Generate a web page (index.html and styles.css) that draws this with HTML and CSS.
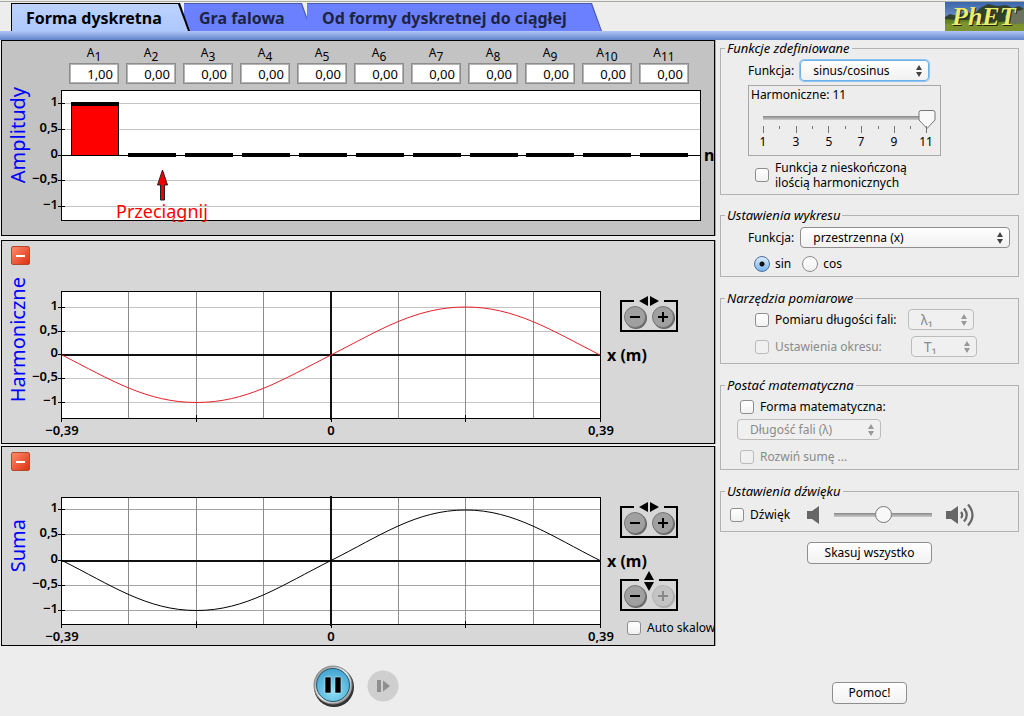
FILE: index.html
```html
<!DOCTYPE html>
<html lang="pl">
<head>
<meta charset="utf-8">
<title>Fourier</title>
<link rel="stylesheet" href="styles.css">
</head>
<body>
<header class="header">
  <nav class="tabs">
    <button class="tab tab-active" type="button"><span>Forma dyskretna</span></button>
    <button class="tab" type="button"><span>Gra falowa</span></button>
    <button class="tab tab-wide" type="button"><span>Od formy dyskretnej do ciągłej</span></button>
  </nav>
  <svg class="logo" viewBox="0 0 79 29" width="79" height="29" role="img" aria-label="PhET">
    <defs>
      <linearGradient id="sky" x1="0" y1="0" x2="0" y2="1"><stop offset="0" stop-color="#3a66ac"/><stop offset="1" stop-color="#9cb4d4"/></linearGradient>
      <linearGradient id="grass" x1="0" y1="0" x2="0" y2="1"><stop offset="0" stop-color="#5d7a22"/><stop offset="1" stop-color="#86a02c"/></linearGradient>
    </defs>
    <rect width="79" height="29" fill="url(#sky)"/>
    <path d="M0 15l5-3 8 2 7-4 9 2 6-6 8-4 9 2 9-1 7 3 6-2 5 3v22H0z" fill="#33402a"/>
    <path d="M0 17l12 1 14 0 16 3 37-3v11H0z" fill="url(#grass)"/>
    <path d="M60 14l8-8 6 3 5-2v14l-9 1-8-2z" fill="#6a7360"/>
    <path d="M0 22l20-2 20 4 39-2v7H0z" fill="#7c9330"/>
    <text class="logo-shadow" x="8" y="24">PhET</text>
    <text class="logo-text" x="7" y="23">PhET</text>
  </svg>
</header>
<main class="layout">
  <section class="work">
    <section class="panel panel-amp">
      <div class="side"><h2 class="title title-amp">Amplitudy</h2></div>
      <div class="amp-body">
        <div class="amps">
          <label class="amp"><span>A<sub>1</sub></span><input type="text" value="1,00"></label>
          <label class="amp"><span>A<sub>2</sub></span><input type="text" value="0,00"></label>
          <label class="amp"><span>A<sub>3</sub></span><input type="text" value="0,00"></label>
          <label class="amp"><span>A<sub>4</sub></span><input type="text" value="0,00"></label>
          <label class="amp"><span>A<sub>5</sub></span><input type="text" value="0,00"></label>
          <label class="amp"><span>A<sub>6</sub></span><input type="text" value="0,00"></label>
          <label class="amp"><span>A<sub>7</sub></span><input type="text" value="0,00"></label>
          <label class="amp"><span>A<sub>8</sub></span><input type="text" value="0,00"></label>
          <label class="amp"><span>A<sub>9</sub></span><input type="text" value="0,00"></label>
          <label class="amp"><span>A<sub>10</sub></span><input type="text" value="0,00"></label>
          <label class="amp"><span>A<sub>11</sub></span><input type="text" value="0,00"></label>
        </div>
        <svg class="chart" viewBox="34 84 680 151">
          <rect x="61.5" y="90.5" width="639" height="130" fill="#fff"/>
          <path class="grid-light" d="M62 103.5H700M62 129.5H700M62 180.5H700M62 206.5H700"/>
          <rect class="frame" x="61.5" y="90.5" width="639" height="130"/>
          <path class="axis" d="M58 103.5h7M58 129.5h7M58 155.5H701M58 180.5h7M58 206.5h7"/>
          <rect x="71.5" y="103.5" width="47" height="52" fill="#f00" stroke="#000"/>
          <path d="M71 104h48M128 155h48M185 155h48M242 155h48M299 155h48M356 155h48M413 155h48M470 155h48M526 155h48M583 155h48M640 155h48" stroke="#000" stroke-width="4"/>
          <g class="ticks ticks-y"><text x="58" y="106">1</text><text x="58" y="132">0,5</text><text x="58" y="158">0</text><text x="58" y="183">−0,5</text><text x="58" y="209">−1</text></g>
          <path d="M162.500 170l5 15h-3v15h-4v-15h-3z" fill="#e00" stroke="#222"/>
          <text class="hint" x="116" y="218">Przeciągnij</text>
          <text class="unit" x="704" y="161">n</text>
        </svg>
      </div>
    </section>
    <section class="panel panel-harm">
      <div class="side">
        <button class="collapse" type="button" aria-label="Zwiń Harmoniczne"></button>
        <h2 class="title title-harm">Harmoniczne</h2>
      </div>
      <svg class="chart" viewBox="34 241 570 202">
        <rect x="61.500" y="291.500" width="539" height="127" fill="#fff"/>
        <path class="grid-light" d="M62 307.500H600M62 331.500H600M62 378.500H600M62 402.500H600"/>
        <path class="grid-dark" d="M128.500 292V418M196.500 292V418M263.500 292V418M398.500 292V418M465.500 292V418M533.500 292V418"/>
        <rect class="frame" x="61.500" y="291.500" width="539" height="127"/>
        <path class="axis" d="M58 307.500h7M58 331.500h7M58 354.500h7M58 378.500h7M58 402.500h7M61.500 418v4M196.500 415v7M331.500 418v4M465.500 415v7M600.500 418v4"/>
        <path class="axis-bold" d="M62 355H601M331 291V420"/>
        <path class="wave wave-red" d="M62 355C111 380 147 402.500 196.500 402.500C246 402.500 282 380 331 355C380 330 416 307 465.500 307C515 307 551 330 600 355"/>
        <g class="ticks ticks-y"><text x="58" y="310">1</text><text x="58" y="334">0,5</text><text x="58" y="357">0</text><text x="58" y="381">−0,5</text><text x="58" y="405">−1</text></g>
        <g class="ticks ticks-x"><text x="62" y="435">−0,39</text><text x="331" y="435">0</text><text x="601" y="435">0,39</text></g>
      </svg>
      <div class="controls">
        <div class="zoom">
          <svg class="arrows" width="22" height="10" viewBox="0 0 22 10"><path d="M10 0v10L1 5zM12 0v10l9-5z"/></svg>
          <button class="round" type="button" aria-label="Pomniejsz"><svg width="12" height="12" viewBox="0 0 12 12"><path d="M1 6h10"/></svg></button>
          <button class="round" type="button" aria-label="Powiększ"><svg width="12" height="12" viewBox="0 0 12 12"><path d="M1 6h10M6 1v10"/></svg></button>
        </div>
        <span class="axis-name">x (m)</span>
      </div>
    </section>
    <section class="panel panel-sum">
      <div class="side">
        <button class="collapse" type="button" aria-label="Zwiń Suma"></button>
        <h2 class="title title-sum">Suma</h2>
      </div>
      <svg class="chart" viewBox="34 447 570 198">
        <rect x="61.500" y="497.500" width="539" height="127" fill="#fff"/>
        <path class="grid-mid" d="M62 509.500H600M62 534.500H600M62 585.500H600M62 610.500H600"/>
        <path class="grid-dark" d="M128.500 498V624M196.500 498V624M263.500 498V624M398.500 498V624M465.500 498V624M533.500 498V624"/>
        <rect class="frame" x="61.500" y="497.500" width="539" height="127"/>
        <path class="axis" d="M58 509.500h7M58 534.500h7M58 560.500h7M58 585.500h7M58 610.500h7M61.500 624v4M196.500 621v7M331.500 624v4M465.500 621v7M600.500 624v4"/>
        <path class="axis-bold" d="M62 561H601M331 496V626"/>
        <path class="wave wave-black" d="M62 560.500C111 585 147 610.500 196.500 610.500C246 610.500 282 585 331 560.500C380 536 416 510 465.500 510C515 510 551 536 600 560.500"/>
        <g class="ticks ticks-y"><text x="58" y="512">1</text><text x="58" y="537">0,5</text><text x="58" y="563">0</text><text x="58" y="588">−0,5</text><text x="58" y="613">−1</text></g>
        <g class="ticks ticks-x"><text x="62" y="641">−0,39</text><text x="331" y="641">0</text><text x="601" y="641">0,39</text></g>
      </svg>
      <div class="controls">
        <div class="zoom">
          <svg class="arrows" width="22" height="10" viewBox="0 0 22 10"><path d="M10 0v10L1 5zM12 0v10l9-5z"/></svg>
          <button class="round" type="button" aria-label="Pomniejsz poziomo"><svg width="12" height="12" viewBox="0 0 12 12"><path d="M1 6h10"/></svg></button>
          <button class="round" type="button" aria-label="Powiększ poziomo"><svg width="12" height="12" viewBox="0 0 12 12"><path d="M1 6h10M6 1v10"/></svg></button>
        </div>
        <span class="axis-name">x (m)</span>
        <div class="zoom zoom-v">
          <svg class="arrows" width="12" height="20" viewBox="0 0 12 20"><path d="M1 9h10L6 0zM1 11h10l-5 9z"/></svg>
          <button class="round" type="button" aria-label="Pomniejsz pionowo"><svg width="12" height="12" viewBox="0 0 12 12"><path d="M1 6h10"/></svg></button>
          <button class="round" type="button" aria-label="Powiększ pionowo" disabled><svg width="12" height="12" viewBox="0 0 12 12"><path d="M1 6h10M6 1v10"/></svg></button>
        </div>
        <label class="check auto"><input type="checkbox"><span>Auto skalow</span></label>
      </div>
    </section>
    <div class="transport">
      <button class="play" type="button" aria-label="Pauza">
        <svg width="44" height="44" viewBox="0 0 44 44">
          <defs><radialGradient id="blue" cx=".5" cy=".7" r=".7"><stop offset="0" stop-color="#8fe0f6"/><stop offset="1" stop-color="#42a3d0"/></radialGradient>
          <linearGradient id="rim" x1="0" y1="0" x2="1" y2="1"><stop offset="0" stop-color="#777"/><stop offset=".5" stop-color="#eee"/><stop offset="1" stop-color="#888"/></linearGradient></defs>
          <circle cx="22" cy="23" r="20" fill="#333"/><circle cx="21" cy="21" r="19" fill="url(#rim)" stroke="#888"/>
          <circle cx="21" cy="21" r="16.500" fill="url(#blue)" stroke="#245a73"/>
          <path d="M13 13h6v16h-6zM23 13h6v16h-6z" stroke="#bfeaf7" stroke-width=".6"/>
        </svg>
      </button>
      <button class="step" type="button" aria-label="Krok" disabled>
        <svg width="32" height="32" viewBox="0 0 32 32"><circle cx="16" cy="16" r="15.500" fill="#cfcfcf"/><path d="M10 10h4v12h-4zM16 10.500v11l7-5.500z" fill="#8f8f8f"/></svg>
      </button>
    </div>
  </section>
  <aside class="sidebar">
    <fieldset class="group group-fn">
      <legend>Funkcje zdefiniowane</legend>
      <div class="row"><label for="fn">Funkcja:</label><select id="fn" class="focused w-fn"><option>sinus/cosinus</option></select></div>
      <div class="harmonics">
        <label for="harm">Harmoniczne: 11</label>
        <input id="harm" class="range-point" type="range" min="1" max="11" value="11">
        <svg class="scale" viewBox="0 0 191 26" width="191" height="26">
          <path d="M14.500 0v7M47.500 0v7M79.500 0v7M112.500 0v7M145.500 0v7M177.500 0v7M30.500 0v3M63.500 0v3M96.500 0v3M129.500 0v3M161.500 0v3" stroke="#777"/>
          <g><text x="14" y="20">1</text><text x="47" y="20">3</text><text x="80" y="20">5</text><text x="112" y="20">7</text><text x="145" y="20">9</text><text x="177" y="20">11</text></g>
        </svg>
      </div>
      <label class="check infinite"><input type="checkbox"><span>Funkcja z nieskończoną<br>ilością harmonicznych</span></label>
    </fieldset>
    <fieldset class="group group-plot">
      <legend>Ustawienia wykresu</legend>
      <div class="row"><label for="dom">Funkcja:</label><select id="dom" class="w-dom"><option>przestrzenna (x)</option></select></div>
      <div class="radios">
        <label class="check"><input type="radio" name="wave" checked><span>sin</span></label>
        <label class="check"><input type="radio" name="wave"><span>cos</span></label>
      </div>
    </fieldset>
    <fieldset class="group group-tools">
      <legend>Narzędzia pomiarowe</legend>
      <div class="tool"><label class="check"><input type="checkbox"><span>Pomiaru długości fali:</span></label><select class="w-sym" disabled aria-label="Długość fali"><option>λ₁</option></select></div>
      <div class="tool"><label class="check"><input type="checkbox" disabled><span>Ustawienia okresu:</span></label><select class="w-sym" disabled aria-label="Okres"><option>T₁</option></select></div>
    </fieldset>
    <fieldset class="group group-math">
      <legend>Postać matematyczna</legend>
      <label class="check"><input type="checkbox"><span>Forma matematyczna:</span></label>
      <select class="w-math" disabled aria-label="Forma"><option>Długość fali (λ)</option></select>
      <label class="check"><input type="checkbox" disabled><span>Rozwiń sumę ...</span></label>
    </fieldset>
    <fieldset class="group group-sound">
      <legend>Ustawienia dźwięku</legend>
      <label class="check"><input type="checkbox"><span>Dźwięk</span></label>
      <svg class="quiet" width="13" height="18" viewBox="0 0 13 18"><path d="M0 5h5l7-5v18l-7-5H0z" fill="#666"/></svg>
      <input class="range-round" type="range" min="0" max="100" value="50" aria-label="Głośność">
      <svg width="29" height="24" viewBox="0 0 29 24"><path d="M0 8h5l7-5v18l-7-5H0z" fill="#666"/><path d="M15 9q2.500 3 0 6M18 5.500q5.500 6.500 0 13M22 1.500q9 10.500 0 21" fill="none" stroke="#666" stroke-width="2.200"/></svg>
    </fieldset>
    <button class="push reset" type="button">Skasuj wszystko</button>
    <button class="push help" type="button">Pomoc!</button>
  </aside>
</main>
</body>
</html>
```
FILE: styles.css
```css
* { box-sizing: border-box; }
body {
  margin: 0;
  min-height: 100vh;
  display: flex;
  flex-direction: column;
  background: #ededed;
  color: #000;
  font: 12px/16px "Noto Sans", "Open Sans", sans-serif;
}
button, input, select { font: inherit; color: inherit; margin: 0; }
button { padding: 0; border: 0; background: none; }

.header {
  display: flex;
  justify-content: space-between;
  align-items: flex-end;
  height: 40px;
  padding: 2px 0 9px;
  background:
    linear-gradient(#a8aaa0, #a8aaa0) 0 1px / 100% 1px no-repeat,
    linear-gradient(#b0c6f8, #6383cb) bottom / 100% 9px no-repeat;
}
.tabs { display: flex; padding-left: 11px; }
.tab {
  position: relative;
  z-index: 1;
  min-width: 128px;
  height: 28px;
  padding: 0 26px 0 15px;
  margin-left: -5px;
  background: #4a5ab0;
  color: #1c2440;
  font: bold 16px/30px "Noto Sans", "Open Sans", sans-serif;
  text-align: left;
  clip-path: polygon(0 0, calc(100% - 10px) 0, 100% 100%, 0 100%);
}
.tab::before {
  content: "";
  position: absolute;
  inset: 1px 1px 0 0;
  background: #6b80ff;
  clip-path: polygon(0 0, calc(100% - 10px) 0, 100% 100%, 0 100%);
}
.tab span { position: relative; }
.tab-active { z-index: 2; min-width: 179px; margin: 0 -1px 0 0; background: #000; color: #000; }
.tab-active::before { inset: 1px 2px 0 1px; background: linear-gradient(#bdd2ff, #adc8fb); }
.tab-wide { min-width: 295px; }
.logo { display: block; }
.logo text { font: italic bold 26px "Liberation Serif", serif; }
.logo-shadow { fill: #1c2010; }
.logo-text { fill: #e8ec72; }

.layout { flex: 1; display: flex; }
.work { flex: 1; min-width: 0; padding-left: 1px; display: flex; flex-direction: column; }
.panel { display: flex; border: 1px solid #000; background: #d7d7d7; box-shadow: 1px 0 0 #aaa; overflow: hidden; }
.panel-amp { background: #c3c3c3; margin-bottom: 4px; }
.panel-harm { margin-bottom: 2px; }
.side { flex: 0 0 32px; display: flex; flex-direction: column; align-items: center; }
.title {
  margin: 0;
  color: #00f;
  font-weight: normal;
  font-size: 20px;
  line-height: 28px;
  writing-mode: vertical-rl;
  transform: rotate(180deg);
  white-space: nowrap;
}
.title-amp { margin-top: 46px; }
.title-harm { margin-top: 12px; }
.title-sum { margin-top: 48px; }
.collapse {
  width: 19px;
  height: 19px;
  margin: 5px 0 0 4px;
  border: 1px solid #b3482c;
  border-radius: 2px;
  background: linear-gradient(#fff, #fff) center / 9px 2px no-repeat, linear-gradient(135deg, #ff8a6a, #dd3410);
}
.chart { display: block; flex: 1; min-width: 0; width: 100%; overflow: visible; }
.amp-body { flex: 1; min-width: 0; }
.amps {
  display: grid;
  grid-template-columns: repeat(11, 1fr);
  column-gap: 7px;
  height: 43px;
  padding: 3px 25px 0 35px;
}
.amp { display: flex; flex-direction: column; text-align: center; line-height: 18px; }
.amp span { height: 19px; }
.amp sub { font-size: 12px; line-height: 12px; vertical-align: -4px; }
.amp input {
  width: 100%;
  height: 21px;
  padding: 0 5px;
  border: 1px solid #8c8c8c;
  outline: 1px solid #b4b4b4;
  outline-offset: -2px;
  background: #fff;
  font-size: 13px;
  text-align: right;
}
.grid-light { stroke: #c4c4c4; fill: none; }
.grid-mid { stroke: #a4a4a4; fill: none; }
.grid-dark { stroke: #8c8c8c; fill: none; }
.frame { fill: none; stroke: #000; }
.axis { stroke: #000; fill: none; }
.axis-bold { stroke: #111; stroke-width: 2; fill: none; }
.wave { fill: none; stroke-width: 1; }
.wave-red { stroke: #e8202a; }
.wave-black { stroke: #000; }
.ticks { font-size: 13px; font-weight: 600; }
.ticks-y { text-anchor: end; }
.ticks-x { text-anchor: middle; }
.hint { font-size: 18px; fill: #f00; }
.unit { font-size: 16px; font-weight: bold; }

.controls { flex: 0 0 110px; min-width: 0; display: flex; flex-direction: column; align-items: flex-start; padding: 59px 0 0 3px; }
.zoom {
  position: relative;
  display: flex;
  justify-content: space-between;
  width: 58px;
  height: 32px;
  margin-left: 13px;
  padding: 4px 2px;
  border: 2px solid #000;
}
.arrows { position: absolute; top: -6px; left: 12px; width: 30px; height: 10px; background: #d7d7d7; }
.zoom-v { margin-top: 9px; }
.zoom-v .arrows { top: -10px; left: 17px; width: 20px; height: 20px; background: linear-gradient(#d7d7d7, #d7d7d7) center / 20px 6px no-repeat; }
.round {
  width: 22px;
  height: 22px;
  display: grid;
  place-items: center;
  border: 1px solid #777;
  border-radius: 50%;
  background: #a0a0a0;
  box-shadow: 1px 1px 0 #666;
}
.round path { stroke: #000; stroke-width: 2; }
.round:disabled { background: #c4c4c4; border-color: #b4b4b4; box-shadow: 1px 1px 0 #aaa; }
.round:disabled path { stroke: #888; }
.axis-name { margin-top: 14px; font-size: 16px; line-height: 18px; font-weight: bold; }
.auto { margin: 9px 0 0 20px; }

.transport { display: flex; align-items: center; gap: 11px; padding: 18px 0 0 311px; }
.play svg, .step svg { display: block; }

.sidebar { flex: 0 0 309px; display: flex; flex-direction: column; padding: 0 5px 12px; }
.group { min-width: 0; margin: 0 0 13px; border: 1px solid #b2b2b2; padding: 0 0 0 27px; }
.group legend { margin-left: -23px; padding: 0 2px; font-size: 13px; line-height: 16px; font-style: italic; }
.row { display: flex; align-items: center; gap: 6px; }
.group label { white-space: nowrap; }
select {
  appearance: none;
  height: 21px;
  padding: 0 24px 0 12px;
  border: 1px solid #8e8e8e;
  border-radius: 4px;
  background: url("data:image/svg+xml,%3Csvg xmlns='http://www.w3.org/2000/svg' width='6' height='12'%3E%3Cpath d='M0 5L3 0l3 5zM0 7h6L3 12z' fill='%23444'/%3E%3C/svg%3E") right 6px center no-repeat, linear-gradient(#fff, #f1f1f1);
  line-height: 18px;
}
select:disabled {
  border-color: #bcbcbc;
  color: #8a8a8a;
  opacity: 1;
  background: url("data:image/svg+xml,%3Csvg xmlns='http://www.w3.org/2000/svg' width='6' height='12'%3E%3Cpath d='M0 5L3 0l3 5zM0 7h6L3 12z' fill='%23999'/%3E%3C/svg%3E") right 6px center no-repeat, #f0f0f0;
}
.focused { border-color: #6fb0e8; box-shadow: 0 0 0 1px #8ec5f4; }
.w-fn { width: 129px; }
.w-dom { width: 210px; }
.w-sym { width: 66px; font-size: 14px; }
.w-math { width: 144px; }
.check { display: flex; align-items: center; gap: 6px; white-space: nowrap; }
input[type="checkbox"], input[type="radio"] {
  appearance: none;
  flex: none;
  width: 14px;
  height: 14px;
  border: 1px solid #8e8e8e;
  border-radius: 3px;
  background: linear-gradient(#fff, #f2f2f2);
}
input[type="radio"] { width: 16px; height: 16px; border-radius: 50%; }
input[type="radio"]:checked { border-color: #4d6f9e; background: radial-gradient(circle at center, #111 2px, transparent 3px), linear-gradient(#dcecfb, #78b4ec); }
input:disabled { border-color: #bbb; background: #f0f0f0; }
input:disabled + span { color: #8a8a8a; }

.group-fn { padding-top: 4px; padding-bottom: 4px; margin-bottom: 12px; }
.harmonics { width: 193px; margin-top: 4px; border: 1px solid #a8a8a8; height: 71px; padding-top: 1px; }
.harmonics label { display: block; padding-left: 2px; }
.range-point, .range-round { appearance: none; display: block; background: none; }
.range-point { width: 180px; height: 20px; margin: 7px 0 0 7px; }
.range-point::-webkit-slider-runnable-track { height: 20px; background: linear-gradient(#888, #ccc) 7px 6px / 163px 4px no-repeat; }
.range-point::-webkit-slider-thumb {
  appearance: none;
  width: 18px;
  height: 20px;
  background: url("data:image/svg+xml,%3Csvg xmlns='http://www.w3.org/2000/svg' width='18' height='20'%3E%3Cpath d='M3 .5h12q2 0 2 2V10l-8 8.500L1 10V2.500q0-2 2-2z' fill='%23f8f8f8' stroke='%23777'/%3E%3C/svg%3E");
}
.scale { display: block; margin-top: -4px; }
.scale text { text-anchor: middle; }
.infinite { margin: 4px 0 0 7px; line-height: 15px; }
.group-plot { padding-top: 4px; }
.radios { display: flex; gap: 11px; padding: 8px 0 4px 6px; }
.radios .check { gap: 5px; }
.group-tools { padding: 3px 0 6px 34px; }
.group-tools legend { margin-left: -30px; }
.tool { display: flex; align-items: center; gap: 11px; }
.tool + .tool { margin-top: 6px; gap: 29px; }
.group-math { padding: 6px 0 4px 16px; }
.group-math legend { margin-left: -12px; }
.group-math .check { margin-left: 3px; }
.group-math select { display: block; margin: 4px 0 9px; }
.group-sound { display: flex; align-items: center; padding: 4px 0 4px 9px; margin-bottom: 10px; }
.group-sound legend { margin-left: -5px; }
.quiet { margin: 0 14px 0 17px; }
.range-round { width: 98px; height: 18px; margin-right: 14px; }
.range-round::-webkit-slider-runnable-track { height: 18px; background: linear-gradient(#888, #ccc) center / 100% 4px no-repeat; }
.range-round::-webkit-slider-thumb { appearance: none; width: 17px; height: 17px; border: 1px solid #777; border-radius: 50%; background: #f8f8f8; }
.push {
  height: 22px;
  border: 1px solid #8e8e8e;
  border-radius: 4px;
  background: linear-gradient(#fff, #f2f2f2);
}
.reset { align-self: center; width: 125px; }
.help { align-self: center; width: 75px; margin-top: auto; }
```
